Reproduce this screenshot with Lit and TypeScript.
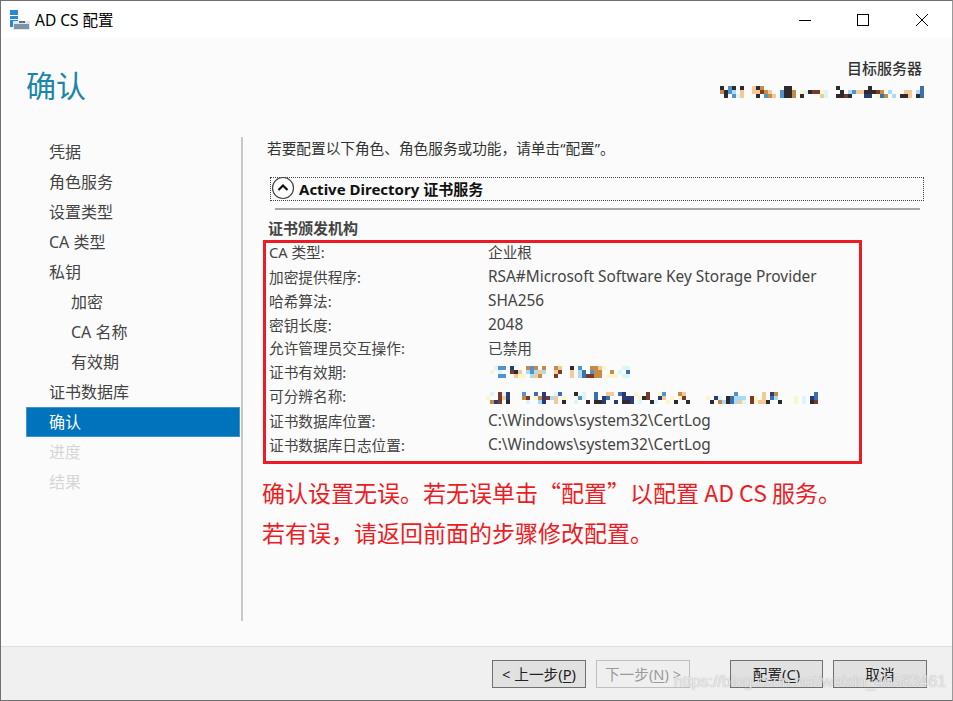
import { LitElement, html, css, svg } from "lit";
import { customElement } from "lit/decorators.js";

const P: Record<string, string> = {
  k: "#2e2a2e", b: "#4f93d0", l: "#a8dcf5", c: "#d9f6fb", o: "#c98a45", p: "#f5c995",
  r: "#7a3a2a", n: "#2a3a7a", y: "#fbf6c8", s: "#3a70b0",
};
/* Each row lists colour+column cells of the pixelated (redacted) text. */
function mosaic(cols: number, rows: string[], cls: string) {
  const w = cols * 4;
  return html`<svg class="mosaic ${cls}" width=${w} height="12" viewBox="0 0 ${w} 12" shape-rendering="crispEdges">
    ${rows.map((r, y) =>
      r.split(" ").map((c) => svg`<rect x=${+c.slice(1) * 4} y=${y * 4} width="4" height="4" fill=${P[c[0]]}/>`)
    )}
  </svg>`;
}

const SERVER = [
  "k0 b2 k3 k5 p8 k9 o10 k16 k17 k29 k37 s50",
  "o0 k1 b2 l3 p5 p8 p9 r10 o11 p12 b15 k16 k17 o18 y20 c21 k22 r23 r24 y25 c26 k30 l32 b33 p34 p35 k36 k37 k38 r39 o40 l42 p46 p47 l49 s50",
  "k1 b3 c4 p5 k9 b11 o12 p13 b15 k16 k17 o18 k20 p25 c26 k29 k30 r31 k32 n36 n37 y39 s40 o41 l43 k45 k46 p47 k49 s50",
];
const VALIDITY = [
  "c1 b2 b3 n5 o9 b10 o11 o13 o16 p17 k20 b22 o25 o26 p27 y28 c33 c34",
  "y0 c2 r5 k6 p7 l9 b10 l11 p12 l13 p16 r17 p20 l22 s23 b25 o26 o27 o30 c32 s34",
  "b2 b3 p6 y7 y8 l10 p11 o12 r16 p20 l22 s23 r24 r25 o26 o27 y29 y30 y31 c33 c34",
];
const DN = [
  "c1 r3 c4 n5 b9 s12 n14 c17 s18 k22 c24 s27 p30 p31 s33 n34 y37 r40 y43 b44 o48 p49 b62 p69 n71 o72 s82",
  "y0 r3 p4 n5 o9 r10 y12 o13 n14 r15 l16 p17 y19 b23 c24 s27 n29 s30 n34 n35 n36 y38 k39 r40 n43 p44 y46 y48 r49 y55 n57 c58 k60 s61 l62 l63 l64 r66 y67 p69 s71 l72 y77 c79 n81 s82",
  "o1 n2 r3 k5 c10 l13 n14 p17 k19 c22 k25 k27 k28 n29 n32 k34 k35 n36 c38 k41 c42 y45 k47 k50 k56 o58 l59 k60 s61 l62 p63 c64 r66 y67 p68 p69 k70 k73 y77 c79 k81 r82",
];

const NAV = [
  ["凭据", 0, ""], ["角色服务", 0, ""], ["设置类型", 0, ""], ["CA 类型", 0, ""], ["私钥", 0, ""],
  ["加密", 1, ""], ["CA 名称", 1, ""], ["有效期", 1, ""], ["证书数据库", 0, ""],
  ["确认", 0, "sel"], ["进度", 0, "off"], ["结果", 0, "off"],
] as const;

const lat = (t: string) => html`<span class="lat">${t}</span>`;
const ROWS: [string, unknown][] = [
  ["CA 类型:", "企业根"],
  ["加密提供程序:", lat("RSA#Microsoft Software Key Storage Provider")],
  ["哈希算法:", lat("SHA256")],
  ["密钥长度:", lat("2048")],
  ["允许管理员交互操作:", "已禁用"],
  ["证书有效期:", mosaic(35, VALIDITY, "v")],
  ["可分辨名称:", mosaic(84, DN, "d")],
  ["证书数据库位置:", lat("C:\\Windows\\system32\\CertLog")],
  ["证书数据库日志位置:", lat("C:\\Windows\\system32\\CertLog")],
];

@customElement("app-root")
export class AppRoot extends LitElement {
  static styles = css`
    :host { display: block; width: 953px; height: 701px; font-family: "Noto Sans", "Noto Sans CJK SC", sans-serif; font-size: 15px; color: #444; }
    .win { box-sizing: border-box; width: 953px; height: 701px; border: 1px solid #707070; border-right-color: #9a9a9a; display: flex; flex-direction: column; background: #fbfbfb; position: relative; overflow: hidden; }
    .title { height: 37px; flex: none; background: #fff; display: flex; align-items: center; padding-left: 9px; color: #000; font-size: 15.5px; }
    .title .ico { margin-right: 5px; }
    .ctrls { margin-left: auto; display: flex; padding-right: 1px; }
    .ctrls span { width: 58.5px; height: 37px; display: flex; align-items: center; justify-content: center; }
    .body { flex: 1; display: flex; flex-direction: column; min-height: 0; }
    .head { height: 99px; flex: none; display: flex; justify-content: space-between; padding: 0 28px 0 25px; box-sizing: border-box; }
    h1 { margin: 26px 0 0; font-weight: 400; font-size: 30px; line-height: 44px; color: #1a87a8; }
    .target { text-align: right; padding-top: 20px; font-size: 15px; font-weight: 500; color: #333; line-height: 20px; }
    .target-name { padding-right: 2px; }
    .target svg { display: block; margin: 8px 0 0 auto; }
    .main { flex: 1; display: flex; min-height: 0; padding-bottom: 25px; }
    nav { width: 214px; margin-left: 25px; flex: none; }
    .item { height: 30px; line-height: 30px; padding-left: 23px; font-size: 16px; color: #444; box-sizing: border-box; }
    .item.sub { padding-left: 45px; }
    .item.sel { background: #0073bd; color: #fff; box-shadow: inset 0 0 0 1px #3d94cf; }
    .item.off { color: #d6d6d6; }
    .content { flex: 1; margin-left: 1px; border-left: 2px solid #c8c8c8; padding-left: 24px; min-width: 0; }
    .intro { font-size: 14.67px; line-height: 20px; margin-top: 1px; color: #333; }
    .section { margin: 19px 0 0 3px; width: 654px; height: 24px; box-sizing: border-box; border: 1px dotted #444; padding-bottom: 2px; display: flex; align-items: center; font-weight: 700; font-size: 15px; color: #111; }
    .section svg { margin-right: 4px; flex: none; }
    .rule { height: 2px; background: #a6a6a6; width: 645px; margin: 7px 0 0 8px; }
    .subhead { font-weight: 700; font-size: 15px; line-height: 20px; margin: 8px 0 0 1px; color: #444; }
    .box { width: 599px; height: 224px; box-sizing: border-box; border: 3px solid #ed1c24; margin: 2px 0 0 -4px; padding-left: 3px; }
    .rows { margin-top: -3px; }
    .row { display: grid; grid-template-columns: 219px 1fr; height: 24px; line-height: 24px; font-size: 14.67px; align-items: center; }
    .lat { font-size: 15.4px; }
    .row svg { display: block; }
    .row svg.v { margin: 0 0 0 2px; }
    .row svg.d { margin: 4px 0 0 -2px; }
    .note { color: #ed1c24; font-family: "Noto Sans CJK SC", sans-serif; font-size: 23px; line-height: 40px; margin: 8px 0 0 -5px; white-space: nowrap; }
    footer { height: 54px; flex: none; background: #f0f0f0; border-top: 1px solid #dfdfdf; display: flex; padding: 13px 0 0 491px; box-sizing: border-box; }
    button { box-sizing: border-box; width: 94px; height: 28px; padding: 0 0 2px; border: 1px solid #707070; background: #e1e1e1; font: inherit; font-size: 14.67px; color: #222; margin-right: 10px; }
    button.off { border-color: #bfbfbf; background: #efefef; color: #9a9a9a; margin-right: 40px; }
    button.cfg { width: 93px; }
    u { text-underline-offset: 2px; }
    .mark { position: absolute; left: 673px; top: 672px; font-family: "Liberation Sans", sans-serif; font-size: 16px; color: rgba(255,255,255,.75); white-space: nowrap; text-shadow: 0 0 1px rgba(120,120,120,.75); }
  `;

  render() {
    return html`<div class="win">
      <div class="title">
        <svg class="ico" width="20" height="20" viewBox="0 0 20 20">
          <rect x="0" y="0" width="8" height="5" fill="#2b88d8"/><rect x="0" y="6" width="8" height="3" fill="#2b88d8"/><rect x="0" y="10" width="8" height="7" fill="#2b88d8"/>
          <rect x="3" y="11" width="17" height="9" fill="#dfe7ee"/><rect x="4" y="14" width="15" height="5" fill="#7e93a8"/><rect x="9" y="11" width="6" height="2" fill="#5d6f80"/>
        </svg>
        AD CS 配置
        <div class="ctrls">
          <span><svg width="12" height="12" viewBox="0 0 12 12"><path d="M0 6.500h12" stroke="#000" fill="none"/></svg></span>
          <span><svg width="12" height="12" viewBox="0 0 12 12"><rect x=".5" y=".5" width="11" height="11" stroke="#000" fill="none"/></svg></span>
          <span><svg width="12" height="12" viewBox="0 0 12 12"><path d="M0 0l12 12M12 0L0 12" stroke="#000" fill="none"/></svg></span>
        </div>
      </div>
      <div class="body">
        <div class="head">
          <h1>确认</h1>
          <div class="target"><div class="target-name">目标服务器</div>${mosaic(51, SERVER, "")}</div>
        </div>
        <div class="main">
          <nav>${NAV.map(([t, s, c]) => html`<div class="item ${s ? "sub" : ""} ${c}">${t}</div>`)}</nav>
          <div class="content">
            <div class="intro">若要配置以下角色、角色服务或功能，请单击“配置”。</div>
            <div class="section">
              <svg width="24" height="24" viewBox="0 0 24 24"><circle cx="12" cy="12" r="10.500" fill="#fff" stroke="#444" stroke-width="1.200"/><path d="M7.500 14L12 9.500L16.500 14" fill="none" stroke="#111" stroke-width="2.200"/></svg>
              Active Directory 证书服务
            </div>
            <div class="rule"></div>
            <div class="subhead">证书颁发机构</div>
            <div class="box"><div class="rows">${ROWS.map(([a, b]) => html`<div class="row"><span>${a}</span><span>${b}</span></div>`)}</div></div>
            <div class="note">确认设置无误。若无误单击“配置”以配置 AD CS 服务。<br>若有误，请返回前面的步骤修改配置。</div>
          </div>
        </div>
        <footer>
          <button>&lt; 上一步(<u>P</u>)</button>
          <button class="off">下一步(<u>N</u>) &gt;</button>
          <button class="cfg">配置(<u>C</u>)</button>
          <button>取消</button>
        </footer>
      </div>
      <div class="mark">https://blog.csdn.net/weixin_46583461</div>
    </div>`;
  }
}
